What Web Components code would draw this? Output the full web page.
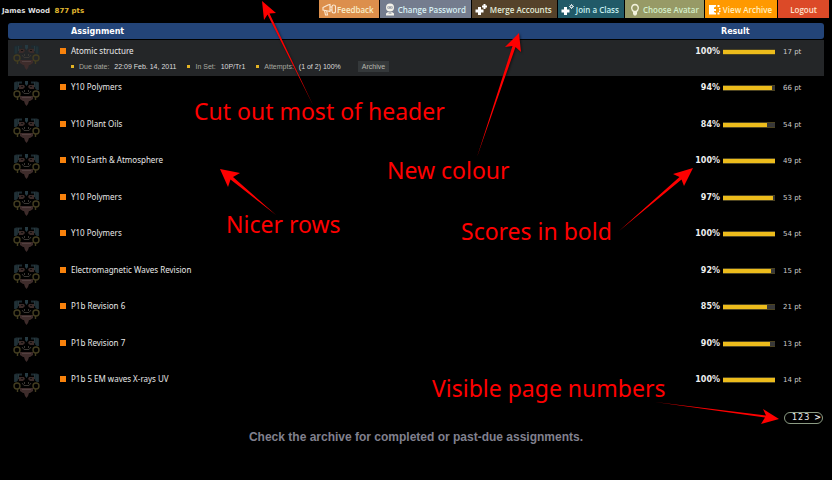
<!DOCTYPE html>
<html lang="en">
<head>
<meta charset="utf-8">
<title>Assignments</title>
<style>
  body { margin: 0; min-height: 100vh; background: #000; color: #ddd; font-family: "DejaVu Sans", Verdana, sans-serif; font-size: 8px; }
</style>
</head>
<body>
<assignments-page></assignments-page>

<script>
const ICONS = {
  feedback: '<g fill="none" stroke="#fbe9d4" stroke-width="1.1"><path d="M1 4.500l5-2.500 2-.5v7l-2-.5-5-1z"/><path d="M2.500 7.500l1 4.500h2l-.8-4"/><rect x="10" y="2" width="3.500" height="8" rx="1.700"/><path d="M8 4h2M8 7h2"/></g>',
  password: '<circle cx="7" cy="4.500" r="4" fill="#f4f2ea"/><path d="M4.500 3.500h5v2h-5z" fill="#747c8e"/><path d="M5.300 4h1v1h-1zM7.700 4h1v1h-1z" fill="#f4f2ea"/><path d="M3 12.500v-2l2-1.500h4l2 1.500v2z" fill="#f4f2ea"/><path d="M5.500 9.500h3v1h-3z" fill="#747c8e"/>',
  merge: '<path d="M3 4h3v2.500h2.500v3h-2.500v2.500h-3v-2.500h-2.500v-3h2.500z" fill="#fff"/><path d="M8.500 1h2v1.500h1.500v2h-1.500v1.500h-2v-1.500h-1.500v-2h1.500z" fill="#fff"/>',
  join: '<path d="M3 4h3v2.500h2.500v3h-2.500v2.500h-3v-2.500h-2.500v-3h2.500z" fill="#fff"/><path d="M10.500 1v5M8 3.500h5M8.800 1.800l3.400 3.400M12.200 1.800l-3.400 3.400" stroke="#fff" stroke-width=".8"/><circle cx="10.500" cy="3.500" r=".8" fill="#215a68"/>',
  avatar: '<path d="M7 1.500a3.400 3.500 0 0 1 2.700 5.500l-1.200 1.500h-3l-1.200-1.500a3.400 3.500 0 0 1 2.700-5.500z" fill="none" stroke="#f2f2dc" stroke-width="1.400"/><path d="M5 9h4v2l-1 1.500h-2l-1-1.500z" fill="#f2f2dc"/>',
  archive: '<path d="M1 2h7v1.500l-2 1v1.500h2v2h-2v1l2 1v1.500h-7z" fill="#fff"/><path d="M9.500 2h2v2h-2zM9.500 9.500h2v2h-2zM11 5h1.500v1.500h-1.500zM11 7.500h1.500v1.500h-1.500z" fill="#fff"/>'
};

const AVATAR = `<svg viewBox="0 0 27 25" width="27" height="25" aria-hidden="true">
  <path d="M1 1.500l2-1h6v2h-3l-1 5-2 1.500h-2zM26 1.500l-2-1h-6v2h3l1 5 2 1.500h2z" fill="#1c2a30"/>
  <path d="M3 1.500v7M5.500 1v5M24 1.500v7M21.500 1v5" stroke="#2b3c43" stroke-width=".8"/>
  <path d="M12 0h3v3l-1.500 2-1.500-2z" fill="#263a42"/>
  <path d="M6 4h5l1 2-2 2h-4zM21 4h-5l-1 2 2 2h4z" fill="#3b2b29"/>
  <path d="M8 5h2v1h-2zM17 5h2v1h-2z" fill="#111"/>
  <path d="M9 10l2 2.500h5l2-2.500M11.500 9v2M15.500 9v2" fill="none" stroke="#3a3733"/>
  <g fill="none" stroke="#433d20" stroke-width="1.400"><circle cx="4" cy="13" r="3"/><circle cx="23" cy="13" r="3"/><path d="M4.500 16v3M22.500 16v3"/></g>
  <path d="M7 15h13v3l-3 2h-1l-1 3-1.500 2-1.500-2-1-3h-1l-3-2z" fill="#3e2c2b"/>
  <path d="M9 16.500h9" stroke="#524040"/>
</svg>`;

const define = (name, css, html) => customElements.define(name, class extends HTMLElement {
  constructor() {
    super();
    this.attachShadow({ mode: 'open' }).innerHTML = `<style>${css}</style>${html}`;
  }
});

/* Coloured button in the top bar: icon name and colour come from attributes. */
customElements.define('nav-button', class extends HTMLElement {
  connectedCallback() {
    const icon = ICONS[this.getAttribute('icon')];
    this.attachShadow({ mode: 'open' }).innerHTML = `<style>
      :host { display: block; }
      button { display: flex; align-items: center; gap: 1px; height: 18px; margin: 0; border: 0; padding: 0 5px 0 3px;
        background: var(--tone); color: var(--ink, #e8f0e8); font: 600 8px "Open Sans", "Noto Sans", sans-serif; white-space: nowrap; cursor: pointer; }
      button.plain { padding: 0 12px; }
      svg { display: block; flex: none; }
    </style><button type="button" class="${icon ? '' : 'plain'}">${icon ? `<svg width="14" height="13" viewBox="0 0 14 13" aria-hidden="true">${icon}</svg>` : ''}<slot></slot></button>`;
  }
});

define('top-bar', `
  :host { display: flex; justify-content: space-between; align-items: flex-start; padding: 0 3px 0 2px; }
  .who { padding-top: 6px; line-height: 10px; font-size: 7px; font-weight: bold; color: #ddd; }
  .pts { margin-left: 2px; color: #e0b830; }
  nav { display: flex; gap: 1px; }
`, `
  <div class="who">James Wood <span class="pts">877 pts</span></div>
  <nav>
    <nav-button icon="feedback" style="--tone:#dc8f4c;--ink:#f8ecc8">Feedback</nav-button>
    <nav-button icon="password" style="--tone:#747c8e;--ink:#d8f0f4">Change Password</nav-button>
    <nav-button icon="merge" style="--tone:#55422a;--ink:#e4ecd8">Merge Accounts</nav-button>
    <nav-button icon="join" style="--tone:#215a68;--ink:#c8f0f0">Join a Class</nav-button>
    <nav-button icon="avatar" style="--tone:#979a66;--ink:#d4f0cc">Choose Avatar</nav-button>
    <nav-button icon="archive" style="--tone:#ff9900;--ink:#fff0c0">View Archive</nav-button>
    <nav-button style="--tone:#dc4a28;--ink:#fce4d0">Logout</nav-button>
  </nav>
`);

/* Score with its bar and points. */
customElements.define('score-bar', class extends HTMLElement {
  connectedCallback() {
    const pct = Number(this.getAttribute('percent'));
    this.attachShadow({ mode: 'open' }).innerHTML = `<style>
      :host { display: grid; grid-template-columns: 40px 52px 28px; align-items: center; line-height: 10px; }
      b { padding-right: 3px; text-align: right; color: #eee; }
      .track { height: 4px; border: 1px solid #4c4320; border-width: 1px 0; background: #383838; }
      .fill { height: 4px; width: ${pct}%; background: #ecbc1c; }
      .pts { padding-left: 8px; font-size: 7px; white-space: nowrap; color: #ccc; }
    </style><b>${pct}%</b><div class="track"><div class="fill"></div></div><span class="pts">${this.getAttribute('points')} pt</span>`;
  }
});

define('avatar-face', ':host { display: block; } svg { display: block; }', AVATAR);

const ROWS = [
  ['Atomic structure', 100, 17, true], ['Y10 Polymers', 94, 66], ['Y10 Plant Oils', 84, 54],
  ['Y10 Earth &amp; Atmosphere', 100, 49], ['Y10 Polymers', 97, 53], ['Y10 Polymers', 100, 54],
  ['Electromagnetic Waves Revision', 92, 15], ['P1b Revision 6', 85, 21], ['P1b Revision 7', 90, 13],
  ['P1b 5 EM waves X-rays UV', 100, 14]
];

define('assignment-details', `
  :host { display: flex; align-items: center; gap: 11px; height: 12px; font: 7px "Liberation Sans", Arial, sans-serif; color: #a8a8a0; }
  span { white-space: nowrap; }
  span::before { content: ""; display: inline-block; width: 3px; height: 3px; margin-right: 5px; vertical-align: 1px; background: #e4b424; }
  em { margin-left: 3px; font-style: normal; color: #ddd; }
  button { margin: 0 0 0 6px; border: 0; padding: 0 4px; height: 11px; background: #34383a; color: #b8b8b0; font: inherit; }
`, `
  <span>Due date: <em>22:09 Feb. 14, 2011</em></span>
  <span>In Set: <em>10P/Tr1</em></span>
  <span>Attempts: <em>(1 of 2) 100%</em></span>
  <button type="button">Archive</button>
`);

define('assignment-table', `
  :host { display: block; padding: 0 8px; }
  table { width: 100%; border-collapse: separate; border-spacing: 0; table-layout: fixed; }
  .face { width: 52px; }
  .result { width: 141px; }
  th { height: 16px; padding: 0; background: #234478; color: #fff; font-size: 8px; text-align: left; }
  th:first-child { border-radius: 3px 0 0 3px; }
  th:last-child { border-radius: 0 3px 3px 0; padding-left: 38px; }
  th:nth-child(2) { padding-left: 11px; }
  td { box-sizing: border-box; height: 36px; padding: 6px 0 0; vertical-align: top; }
  td:first-child { padding: 5px 0 0 5px; }
  td:last-child { padding-top: 7px; }
  tr:nth-child(even) td, tbody tr:first-child td { height: 37px; }
  tbody tr:first-child td { border-top: 1px solid #000; background: #242628; }
  .title { display: flex; align-items: center; gap: 5px; font: 8px/10px "Noto Sans", "Open Sans", sans-serif; color: #e8e8e8; }
  .title::before { content: ""; width: 6px; height: 6px; background: #f8820c; }
  assignment-details { margin: 4px 0 0 11px; }
`, `
  <table>
    <colgroup><col class="face"><col><col class="result"></colgroup>
    <thead><tr><th></th><th scope="col">Assignment</th><th scope="col">Result</th></tr></thead>
    <tbody>${ROWS.map(([t, p, n, open]) => `<tr>
      <td><avatar-face></avatar-face></td>
      <td><div class="title">${t}</div>${open ? '<assignment-details></assignment-details>' : ''}</td>
      <td><score-bar percent="${p}" points="${n}"></score-bar></td></tr>`).join('')}
    </tbody>
  </table>
`);

define('page-links', `
  :host { display: flex; justify-content: flex-end; padding: 7px 9px 0 0; }
  nav { display: flex; align-items: center; gap: 1px; box-sizing: border-box; height: 12px; border: 1px solid #8c9c84; border-radius: 6px; padding: 0 1px 0 7px; }
  a { color: #eee; text-decoration: none; line-height: 10px; }
  a:last-child { margin-left: 4px; font-weight: bold; }
`, `<nav aria-label="Pages"><a href="#1">1</a><a href="#2">2</a><a href="#3">3</a><a href="#next">&gt;</a></nav>`);

/* Review notes laid freely over the page, each label with its arrow. */
define('review-notes', `
  :host { position: absolute; inset: 0; overflow: hidden; pointer-events: none; color: #f00; font: 23px/32px "Noto Sans", "Open Sans", sans-serif; }
  svg { position: absolute; left: 0; top: 0; filter: drop-shadow(1px 1px 1px #0008); }
  p { position: absolute; margin: 0; white-space: nowrap; }
`, `
  <svg width="832" height="480" viewBox="0 0 832 480" fill="#f00" aria-hidden="true">
    <path d="M262 1L276 13L269.500 13.500L313 105L267.500 14.500L264 20Z"/>
    <path d="M519 33L521 52L515.500 47L477 157L512.500 46L505 47Z"/>
    <path d="M220 169L240 173L233 177L276 215L230.500 179.500L228 187Z"/>
    <path d="M693 168L684 186L681.500 179.500L619 231L679.500 177L673 174Z"/>
    <path d="M779 419L761 424L765 417.500L655 402L766 415.500L763 409Z"/>
  </svg>
  <p style="left:194px;top:95px">Cut out most of header</p>
  <p style="left:387px;top:154px">New colour</p>
  <p style="left:226px;top:208px">Nicer rows</p>
  <p style="left:461px;top:215px">Scores in bold</p>
  <p style="left:432px;top:372px">Visible page numbers</p>
`);

define('assignments-page', `
  :host { display: block; position: relative; min-height: 100vh; }
  assignment-table { margin-top: 5px; }
  .hint { margin: 6px 0 0; text-align: center; font: bold 12px/14px "Liberation Sans", Arial, sans-serif; color: #80808e; }
`, `
  <top-bar></top-bar>
  <assignment-table></assignment-table>
  <page-links></page-links>
  <p class="hint">Check the archive for completed or past-due assignments.</p>
  <review-notes></review-notes>
`);
</script>
</body>
</html>
